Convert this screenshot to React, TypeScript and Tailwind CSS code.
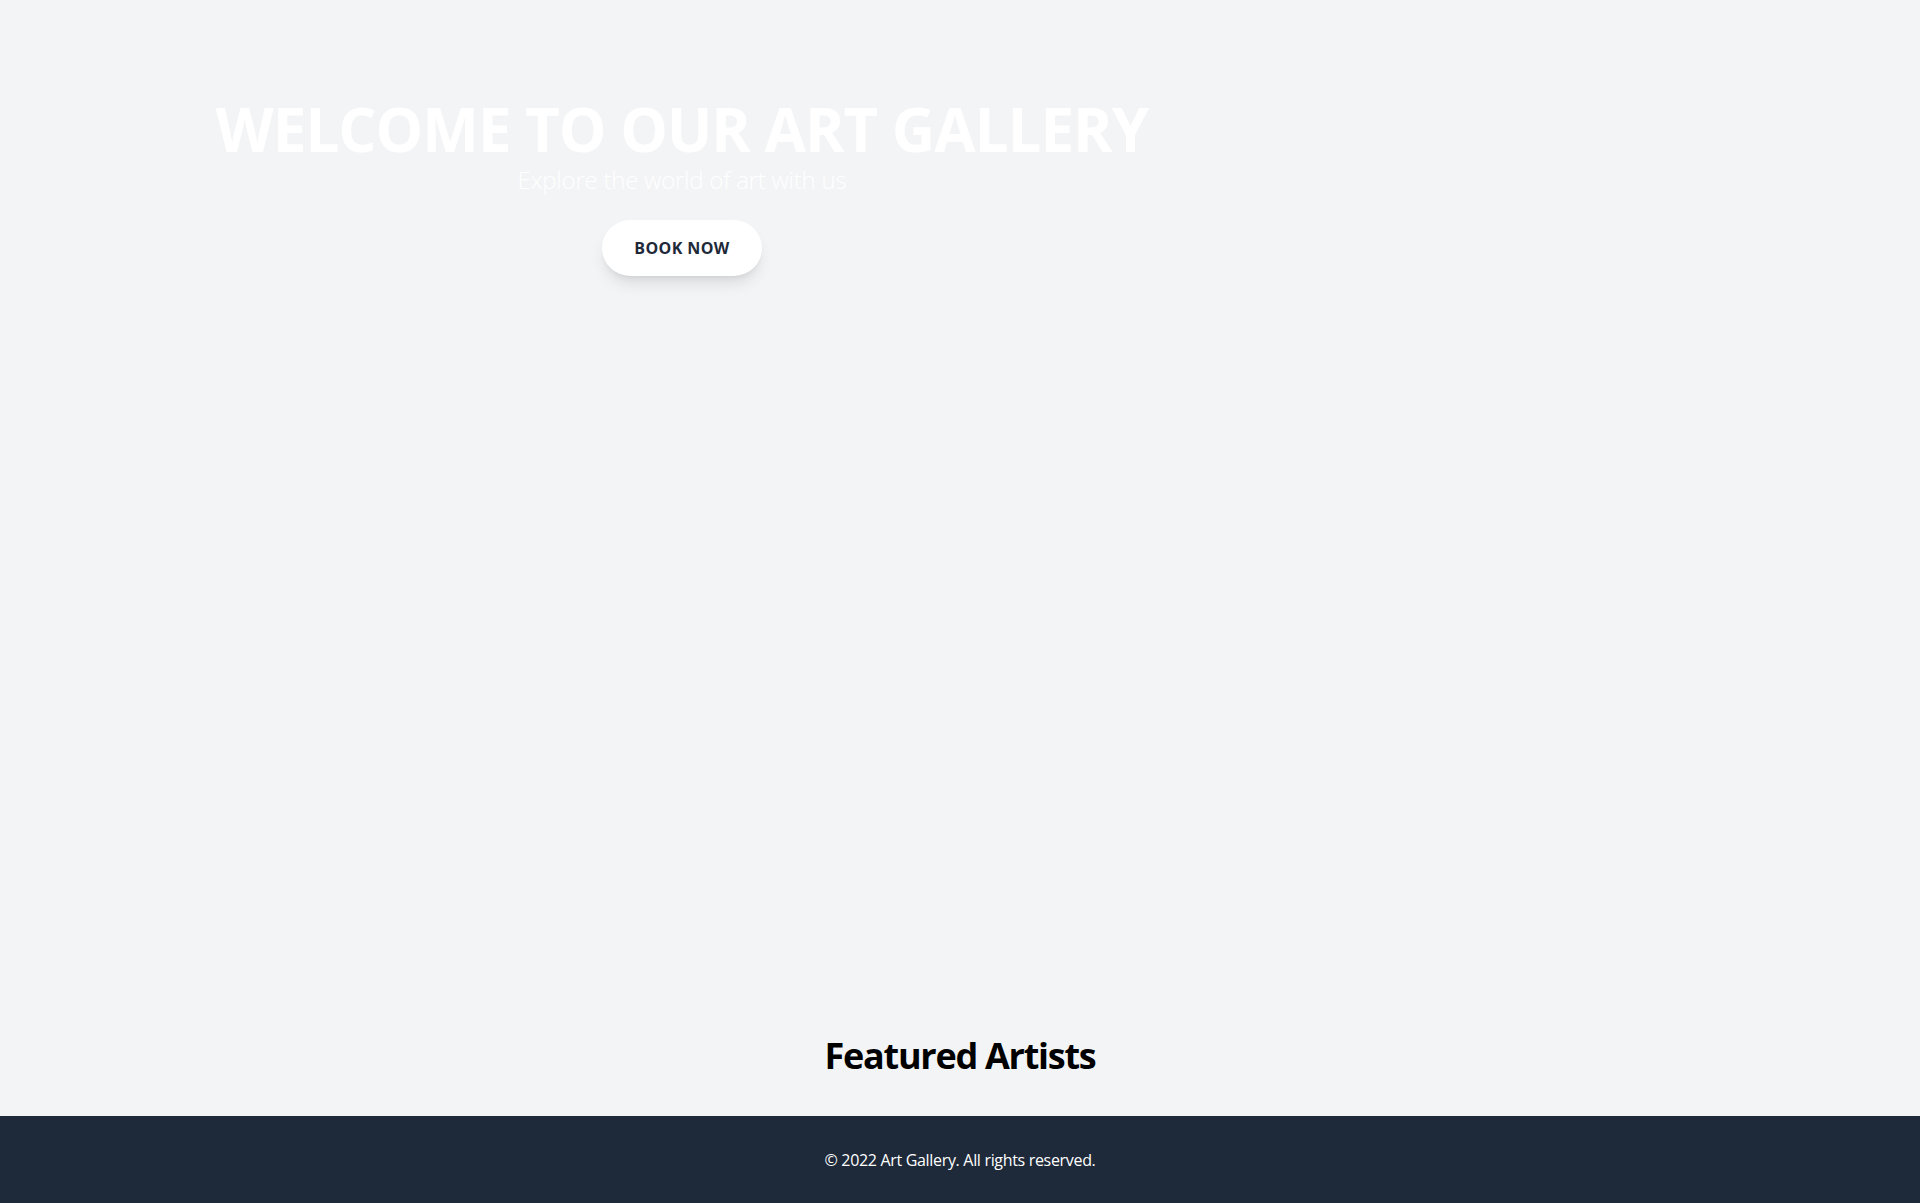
export default function App() {
  return (
    <div className="min-h-screen bg-gray-100 font-['Open_Sans',sans-serif]">
      {/* Hero */}
      <section className="h-[996px] pt-[95px]">
        <div className="w-[1364px] text-center">
          <h1 className="text-6xl font-bold leading-[1.15] tracking-[-1px] text-white">WELCOME TO OUR ART GALLERY</h1>
          <p className="text-2xl font-light tracking-[-0.01em] text-white">Explore the world of art with us</p>
          <button className="mt-6 rounded-full bg-white px-8 py-4 text-base font-bold uppercase tracking-wide text-gray-800 shadow-lg">
            Book Now
          </button>
        </div>
      </section>

      {/* Featured Artists */}
      <section className="py-10">
        <h2 className="text-center text-4xl font-bold tracking-[-0.035em] text-black">Featured Artists</h2>
      </section>

      <footer className="bg-gray-800 py-8 text-center text-base tracking-[-0.02em] text-white">
        © 2022 Art Gallery. All rights reserved.
      </footer>
    </div>
  );
}
